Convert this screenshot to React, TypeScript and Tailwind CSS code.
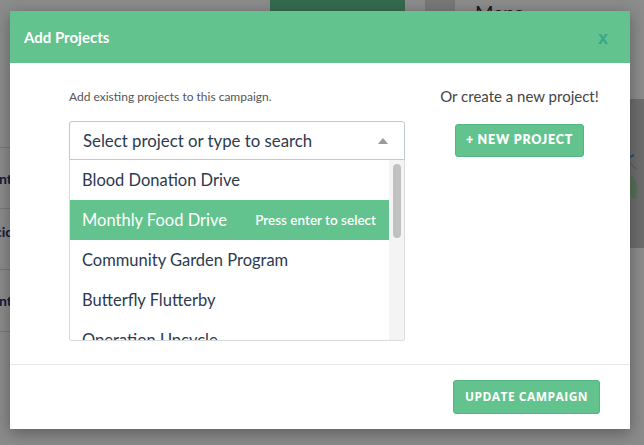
import React from "react";

const font = { fontFamily: "Lato, 'Open Sans', sans-serif" };

function Option({ label }: { label: string }) {
  return (
    <div className="h-[40px] shrink-0 flex items-center pl-[12px] text-[16.5px] text-[#2d3a4e]">{label}</div>
  );
}

export default function App() {
  return (
    <div className="relative w-[644px] h-[445px] overflow-hidden bg-white" style={font}>
      {/* underlying page */}
      <div className="flex flex-col w-full h-full">
        <div className="h-[40px] flex items-start">
          <div className="w-[270px]" />
          <div className="w-[135px] h-[40px] bg-[#62c38e] text-white text-[12px] font-bold tracking-wider flex items-start justify-center pt-[10px]">+ ADD PROJECTS</div>
          <div className="w-[20px]" />
          <div className="w-[30px] h-[40px] bg-[#dcdcdc]" />
          <div className="pl-[20px] text-[20px] text-[#333] leading-[24px]">Maps</div>
        </div>
        <div className="flex flex-1">
          <div className="w-[12px] flex flex-col pt-[107px]">
            <div className="h-[61px] border-t border-[#ddd] flex items-center justify-end text-[14px] font-bold text-[#1e3270] overflow-hidden whitespace-nowrap">Event</div>
            <div className="h-[61px] border-t border-[#ddd] flex items-start pt-[12px] justify-end text-[14px] font-bold text-[#1e3270] overflow-hidden whitespace-nowrap">Socic</div>
            <div className="h-[62px] border-t border-[#ddd] flex items-center justify-end text-[14px] font-bold text-[#1e3270] overflow-hidden whitespace-nowrap">Event</div>
            <div className="h-[40px] border-t border-[#ddd]" />
          </div>
          <div className="flex-1" />
          <div className="w-[20px] flex flex-col pt-[59px]">
            <div className="h-[149px] bg-[#c8c8c8] relative overflow-hidden">
              <svg width="20" height="149" viewBox="0 0 20 149">
                <path d="M0 30 Q8 40 4 50 T12 70" stroke="#7aa8d8" strokeWidth="1" fill="none" />
                <path d="M2 60 L10 56" stroke="#5a8fd0" strokeWidth="2" />
                <path d="M2 80 Q10 70 14 90 L12 100 Q4 98 2 90 Z" fill="#8fd08a" opacity="0.6" />
              </svg>
            </div>
          </div>
        </div>
      </div>

      {/* overlay */}
      <div className="absolute inset-0 bg-black/45" />

      {/* modal */}
      <div className="absolute left-[10px] top-[11px] w-[620px] h-[418px] bg-white flex flex-col shadow-[0_4px_16px_rgba(0,0,0,0.35)]">
        <div className="h-[52px] bg-[#62c38e] flex items-center justify-between pl-[14px] pr-[22px]">
          <div className="text-white font-bold text-[15px]">Add Projects</div>
          <div className="text-[#3aa68a] font-bold text-[18px] leading-none pt-[2px]" style={{ fontFamily: "'Liberation Sans', sans-serif" }}>x</div>
        </div>

        <div className="h-[301px] flex pl-[59px]">
          <div className="w-[336px] flex flex-col">
            <div className="mt-[26px] h-[15px] flex items-center text-[12px] text-[#555]">Add existing projects to this campaign.</div>
            <div className="mt-[17px] h-[39px] shrink-0 border border-[#bfc7d1] rounded-t-[3px] flex items-center justify-between pl-[13px] pr-[16px]">
              <span className="text-[16.8px] text-[#2d3a4e]">Select project or type to search</span>
              <svg width="10" height="6" viewBox="0 0 10 6"><path d="M0 6 L5 0 L10 6 Z" fill="#999" /></svg>
            </div>
            <div className="h-[181px] shrink-0 border-x border-b border-[#dcdcdc] rounded-b-[3px] flex overflow-hidden">
              <div className="flex-1 flex flex-col overflow-hidden">
                <Option label="Blood Donation Drive" />
                <div className="h-[40px] shrink-0 bg-[#62c38e] flex items-center justify-between pl-[12px] pr-[13px]">
                  <span className="text-[16.5px] text-white">Monthly Food Drive</span>
                  <span className="text-[13.5px] text-white font-semibold">Press enter to select</span>
                </div>
                <Option label="Community Garden Program" />
                <Option label="Butterfly Flutterby" />
                <Option label="Operation Upcycle" />
              </div>
              <div className="w-[15px] bg-[#f4f4f4] flex justify-center pt-[4px]">
                <div className="w-[8px] h-[74px] rounded-full bg-[#c1c1c1]" />
              </div>
            </div>
          </div>
          <div className="ml-[14px] w-[201px] flex flex-col items-center">
            <div className="mt-[24px] h-[18px] flex items-center text-[15px] text-[#444]">Or create a new project!</div>
            <div className="mt-[19px] w-[129px] h-[33px] rounded-[3px] bg-[#62c38e] border border-[#55b57f] flex items-center justify-center text-white text-[12.5px] font-extrabold tracking-[0.06em]">+ NEW PROJECT</div>
          </div>
        </div>

        <div className="border-t border-[#e6e6e6] flex-1 flex items-start justify-end pt-[15px] pr-[30px]">
          <div className="w-[147px] h-[34px] rounded-[3px] bg-[#62c38e] border border-[#55b57f] flex items-center justify-center text-white text-[12px] font-bold tracking-[0.04em]" style={{ fontFamily: "'Open Sans', sans-serif" }}>UPDATE CAMPAIGN</div>
        </div>
      </div>
    </div>
  );
}
